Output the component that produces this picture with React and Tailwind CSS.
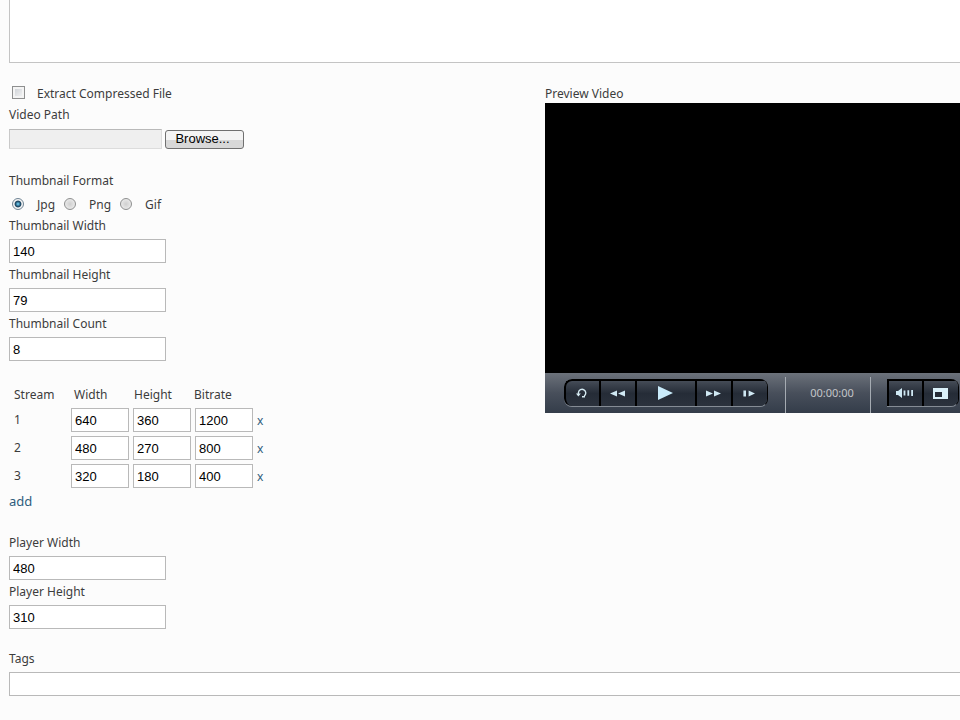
import { useState } from 'react'

const FORMATS = ['Jpg', 'Png', 'Gif']

const INITIAL_STREAMS = [
  { id: 1, width: '640', height: '360', bitrate: '1200' },
  { id: 2, width: '480', height: '270', bitrate: '800' },
  { id: 3, width: '320', height: '180', bitrate: '400' },
]

const inputClass =
  "h-6 border border-[#b9b9b9] bg-white px-[3px] font-['Liberation_Sans',sans-serif] text-[13px] text-black outline-none"

const Field = ({ id, label, defaultValue, wide }) => (
  <div className="flex flex-col items-start">
    <label htmlFor={id} className="pb-px leading-6">
      {label}
    </label>
    <input
      id={id}
      type="text"
      defaultValue={defaultValue}
      className={`${inputClass} ${wide ? 'w-full' : 'w-[157px]'}`}
    />
  </div>
)

const StreamTable = () => {
  const [streams, setStreams] = useState(INITIAL_STREAMS)

  const addStream = (e) => {
    e.preventDefault()
    setStreams([...streams, { id: Date.now(), width: '', height: '', bitrate: '' }])
  }

  const removeStream = (e, id) => {
    e.preventDefault()
    setStreams(streams.filter((stream) => stream.id !== id))
  }

  return (
    <div className="mt-[21px]">
      <table>
        <thead>
          <tr className="h-6 text-left">
            <th className="w-[60px] p-0 pt-0.5 pl-[5px] font-normal">Stream</th>
            <th className="p-0 pt-0.5 pl-[5px] font-normal">Width</th>
            <th className="p-0 pt-0.5 pl-[3px] font-normal">Height</th>
            <th className="p-0 pt-0.5 pl-px font-normal">Bitrate</th>
            <th className="p-0" />
          </tr>
        </thead>
        <tbody>
          {streams.map((stream, index) => (
            <tr key={stream.id} className="h-7">
              <td className="p-0 pl-[5px]">{index + 1}</td>
              {['width', 'height', 'bitrate'].map((key) => (
                <td key={key} className="p-0.5">
                  <input
                    type="text"
                    aria-label={`Stream ${index + 1} ${key}`}
                    defaultValue={stream[key]}
                    className={`${inputClass} block w-[58px]`}
                  />
                </td>
              ))}
              <td className="p-0 pt-0.5 pl-0.5">
                <a href="#remove" onClick={(e) => removeStream(e, stream.id)} className="text-[#2f5c7c]">
                  x
                </a>
              </td>
            </tr>
          ))}
        </tbody>
      </table>
      <a href="#add" onClick={addStream} className="block w-fit text-[13px] leading-[22px] text-[#2f5c7c]">
        add
      </a>
    </div>
  )
}

const PlayerButton = ({ label, className = 'w-9', children }) => (
  <button
    type="button"
    aria-label={label}
    className={`flex items-center justify-center border-t-2 border-l-2 border-black bg-linear-to-b from-[#454c57] via-[#252c37] to-[#2b323d] pr-0.5 pb-px ${className}`}
  >
    {children}
  </button>
)

const Player = () => (
  <div className="w-[480px]">
    <div className="h-[270px] bg-black" />
    <div className="flex h-10 items-stretch bg-linear-to-b from-[#6c727b] via-[#484f5b] to-[#343d4a] pl-[19px]">
      {/* Transport buttons */}
      <div className="my-1.5 flex overflow-hidden rounded-lg border-r border-b border-r-black border-b-[#858c95]">
        <PlayerButton label="Restart" className="w-[35px] rounded-l-lg">
          <svg width="12" height="10" viewBox="0 0 12 10" fill="none">
            <path d="M2.4 7.2V4.6A3.7 3.7 0 1 1 8.2 8" stroke="#d3e8f0" strokeWidth="1.4" />
            <path d="M0 5.4H4.8L2.4 8.6Z" fill="#d3e8f0" />
            <path d="M6 8.8H9" stroke="#d3e8f0" strokeWidth="1.4" />
          </svg>
        </PlayerButton>
        <PlayerButton label="Rewind">
          <svg width="15" height="7" viewBox="0 0 15 7" fill="#cfe8f3">
            <path d="M7 0.5V6.5L0 3.5ZM15 0.5V6.5L8 3.5Z" />
          </svg>
        </PlayerButton>
        <PlayerButton label="Play" className="w-[60px]">
          <svg width="15" height="14" viewBox="0 0 15 14" fill="#c9ebfa">
            <path d="M0 0L15 7L0 14Z" />
          </svg>
        </PlayerButton>
        <PlayerButton label="Fast forward">
          <svg width="15" height="7" viewBox="0 0 15 7" fill="#cfe8f3">
            <path d="M0 0.5V6.5L7 3.5ZM8 0.5V6.5L15 3.5Z" />
          </svg>
        </PlayerButton>
        <PlayerButton label="Step forward">
          <svg width="12" height="7" viewBox="0 0 12 7" fill="#cfe8f3">
            <path d="M0.4 0.5H3V6.5H0.4ZM5.6 0.5V6.5L12 3.5Z" />
          </svg>
        </PlayerButton>
      </div>

      {/* Elapsed time */}
      <div className="mt-1 ml-[17px] flex w-[86px] items-center justify-center border-x border-[#a5abb2] pb-1 pl-2 text-[11px] text-[#c3c5c8]">
        00:00:00
      </div>

      {/* Volume and screen buttons */}
      <div className="my-1.5 ml-4 flex overflow-hidden rounded-r-lg border-r border-b border-r-black border-b-[#858c95]">
        <PlayerButton label="Volume" className="w-[35px]">
          <svg width="18" height="10" viewBox="0 0 18 10" fill="#cfe8f3">
            <path d="M0 3H2L6 0V10L2 7H0Z" />
            <path d="M7.6 2.6H9.4V7.4H7.6ZM11.4 2.2H13.2V7.8H11.4ZM15.2 2H17V8H15.2Z" />
          </svg>
        </PlayerButton>
        <PlayerButton label="Full screen">
          <svg width="15" height="11" viewBox="0 0 15 11">
            <path d="M0 0H15V11H0Z" fill="#d9eff8" />
            <path d="M2 4H9V9H2Z" fill="#252c37" />
          </svg>
        </PlayerButton>
      </div>
    </div>
  </div>
)

const App = () => {
  const [format, setFormat] = useState('Jpg')

  return (
    <form className="min-h-screen overflow-hidden bg-[#fcfcfc] pb-6 pl-[9px] font-['Noto_Sans',sans-serif] text-[12px] leading-[22px] text-[#3c3c3c]">
      <textarea
        aria-label="Description"
        className="block h-[63px] w-full resize-none border-b border-l border-[#c4c4c4] bg-white outline-none"
      />

      <div className="flex pt-5">
        <div className="w-[536px] shrink-0">
          <div className="flex items-center gap-3 pl-[3px]">
            <input
              id="extract"
              type="checkbox"
              className="mb-1 size-[13px] appearance-none border border-[#8e8f8f] bg-linear-to-br from-[#c9cdd2] to-[#f8f8f8] shadow-[inset_0_0_0_2px_#f4f4f4] checked:bg-[#2f5c7c]"
            />
            <label htmlFor="extract">Extract Compressed File</label>
          </div>

          <label htmlFor="path" className="block leading-5">
            Video Path
          </label>
          <div className="flex items-center gap-[3px] pt-1">
            <input
              id="path"
              type="text"
              readOnly
              className="h-5 w-[153px] border border-t-[#b9b9b9] border-r-[#dcdcdc] border-b-[#dcdcdc] border-l-[#c9c9c9] bg-[#efefef] outline-none"
            />
            <button
              type="button"
              className="h-[19px] w-[79px] rounded-[3px] border border-[#707070] bg-linear-to-b from-[#f4f4f4] from-50% to-[#d8d8d8] to-50% pr-1 font-['Liberation_Sans',sans-serif] text-[13px] leading-4 text-black"
            >
              Browse...
            </button>
          </div>

          <fieldset className="pt-[21px]">
            <legend className="contents">Thumbnail Format</legend>
            <div className="flex h-[22px] items-center gap-[9px] pt-1 pl-[3px]">
              {FORMATS.map((name) => (
                <label key={name} className="flex items-center gap-[13px]">
                  <input
                    type="radio"
                    name="format"
                    checked={format === name}
                    onChange={() => setFormat(name)}
                    className="mb-0.5 size-3 appearance-none rounded-full border border-[#8e8f8f] bg-radial from-[#cfcfcf] to-[#f4f4f4] checked:border-[#6f8494] checked:from-[#5fb4d8] checked:from-10% checked:via-[#16405c] checked:via-40% checked:to-[#f4f4f4] checked:to-55%"
                  />
                  {name}
                </label>
              ))}
            </div>
          </fieldset>

          <Field id="thumb-width" label="Thumbnail Width" defaultValue="140" />
          <Field id="thumb-height" label="Thumbnail Height" defaultValue="79" />
          <Field id="thumb-count" label="Thumbnail Count" defaultValue="8" />

          <StreamTable />

          <div className="mt-[19px]">
            <Field id="player-width" label="Player Width" defaultValue="480" />
            <Field id="player-height" label="Player Height" defaultValue="310" />
          </div>
        </div>

        <div className="shrink-0">
          <h2 className="h-5">Preview Video</h2>
          <Player />
        </div>
      </div>

      <div className="-mr-1 mt-[18px]">
        <Field id="tags" label="Tags" defaultValue="" wide />
      </div>
    </form>
  )
}

export default App
